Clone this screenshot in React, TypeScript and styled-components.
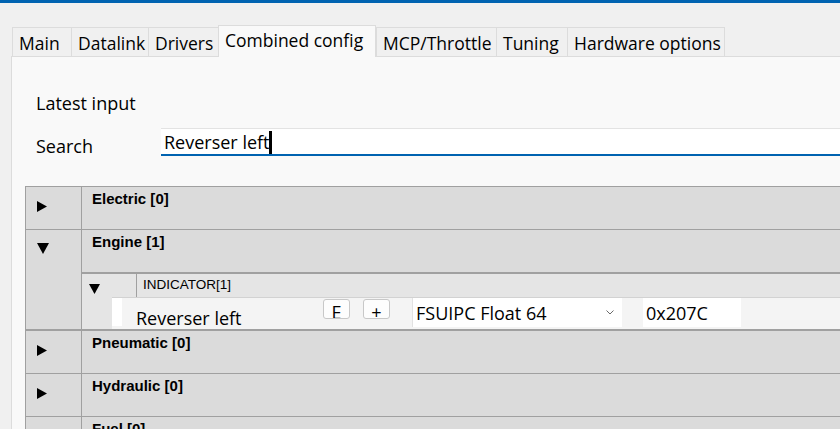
import React from "react";
import styled, { createGlobalStyle } from "styled-components";

const GlobalStyle = createGlobalStyle`
  html, body { margin: 0; padding: 0; overflow: hidden; background: #f0f0f0; }
  body { font-family: "Open Sans", "Noto Sans", sans-serif; color: #000; }
  #root { width: 1000px; }
`;

const Window = styled.div`
  width: 1000px;
  height: 429px;
  display: flex;
  flex-direction: column;
  background: #f0f0f0;
  overflow: hidden;
`;

const AccentBar = styled.div`
  height: 3px;
  flex: none;
  background: #0063b1;
`;

const TabStrip = styled.div`
  display: flex;
  align-items: flex-end;
  height: 31px;
  margin-top: 22px;
  padding-left: 12px;
  flex: none;
  position: relative;
  z-index: 1;
`;

const Tab = styled.div<{ $width: number; $active?: boolean }>`
  box-sizing: border-box;
  width: ${(p) => p.$width}px;
  height: ${(p) => (p.$active ? 32 : 29)}px;
  margin-bottom: ${(p) => (p.$active ? -1 : 0)}px;
  padding: ${(p) => (p.$active ? 2 : 3)}px 0 0 6px;
  border: 1px solid #dcdcdc;
  border-bottom: none;
  border-right: ${(p) => (p.$active ? "1px solid #dcdcdc" : "none")};
  background: ${(p) => (p.$active ? "#f9f9f9" : "#f0f0f0")};
  font-size: 17.5px;
  line-height: 24px;
  white-space: nowrap;
  &:last-child { border-right: 1px solid #dcdcdc; }
`;

const Panel = styled.div`
  flex: 1;
  margin-left: 11px;
  background: #f9f9f9;
  border-left: 1px solid #dcdcdc;
  border-top: 1px solid #dcdcdc;
  padding-top: 34px;
`;

const FormRow = styled.div<{ $gap?: number }>`
  display: grid;
  grid-template-columns: 125px 1fr;
  padding-left: 24px;
  margin-top: ${(p) => p.$gap ?? 0}px;
`;

const FieldLabel = styled.div<{ $offset?: number }>`
  font-size: 18px;
  line-height: 24px;
  padding-top: ${(p) => p.$offset ?? 0}px;
`;

const SearchBox = styled.div`
  box-sizing: border-box;
  height: 28px;
  background: #fff;
  border-top: 1px solid #e3e3e3;
  border-bottom: 2px solid #0063b1;
  padding: 1px 0 0 3px;
  display: flex;
  align-items: center;
  font-size: 18px;
  line-height: 24px;
`;

const TextCaret = styled.span`
  display: inline-block;
  width: 3px;
  height: 23px;
  background: #000;
  margin-left: -1px;
`;

const Tree = styled.div`
  margin: 28px 0 0 13px;
  border-top: 1px solid #a0a0a0;
  border-left: 1px solid #a0a0a0;
  font-family: "Liberation Sans", Arial, sans-serif;
`;

const CategoryRow = styled.div<{ $expanded?: boolean }>`
  display: grid;
  grid-template-columns: 56px 1fr;
  background: #dbdbdb;
  border-bottom: ${(p) => (p.$expanded ? 2 : 1)}px solid #a0a0a0;
`;

const ToggleCell = styled.div<{ $expanded?: boolean }>`
  box-sizing: border-box;
  border-right: 1px solid #a0a0a0;
  padding: ${(p) => (p.$expanded ? 13 : 14)}px 0 0 11px;
`;

const CategoryBody = styled.div`
  min-width: 0;
`;

const CategoryTitle = styled.div`
  box-sizing: border-box;
  height: 42px;
  padding: 3px 0 0 10px;
  font-weight: bold;
  font-size: 15px;
  line-height: 17px;
`;

const Nested = styled.div`
  border-top: 2px solid #a0a0a0;
`;

const SubRow = styled.div`
  display: grid;
  grid-template-columns: 55px 1fr;
  height: 23px;
  background: #e5e5e5;
`;

const SubToggle = styled.div`
  box-sizing: border-box;
  border-right: 1px solid #a0a0a0;
  padding: 10px 0 0 7px;
`;

const SubTitle = styled.div`
  padding: 3px 0 0 6px;
  font-size: 13.5px;
  line-height: 16px;
`;

const DetailRow = styled.div`
  display: grid;
  grid-template-columns: 30px 1fr;
  height: 32px;
`;

const Indent = styled.div`
  background: #e5e5e5;
`;

const DetailBody = styled.div`
  box-sizing: border-box;
  display: flex;
  align-items: flex-start;
  background: #f4f4f4;
  border-top: 1px solid #d2d2d2;
  font-family: "Open Sans", "Noto Sans", sans-serif;
  font-size: 18px;
  line-height: 24px;
`;

const Gutter = styled.div`
  width: 10px;
  height: 28px;
  background: #fff;
  flex: none;
`;

const ItemLabel = styled.div`
  box-sizing: border-box;
  width: 201px;
  height: 28px;
  padding: 8px 0 0 14px;
  overflow: hidden;
  white-space: nowrap;
  flex: none;
`;

const SmallButton = styled.div<{ $gap?: number }>`
  box-sizing: border-box;
  width: 27px;
  height: 20px;
  margin: 1px 0 0 ${(p) => p.$gap ?? 0}px;
  border: 1px solid #c8c8c8;
  border-radius: 3px;
  background: #fdfdfd;
  overflow: hidden;
  text-align: center;
  line-height: 24px;
  flex: none;
`;

const Select = styled.div`
  box-sizing: border-box;
  width: 210px;
  height: 29px;
  margin-left: 22px;
  background: #fff;
  border-left: 1px solid #e2e2e2;
  padding-left: 3px;
  display: flex;
  align-items: center;
  flex: none;
`;

const Chevron = styled.svg`
  margin-left: auto;
  margin-right: 8px;
`;

const ValueBox = styled.div`
  box-sizing: border-box;
  width: 98px;
  height: 29px;
  margin-left: 21px;
  background: #fff;
  padding-left: 3px;
  display: flex;
  align-items: center;
  flex: none;
`;

const Disclosure = ({ open, small }: { open: boolean; small?: boolean }) =>
  open ? (
    <svg width={small ? 11 : 12} height={small ? 10 : 11} style={{ display: "block" }}>
      <polygon points={small ? "0,0 11,0 5.5,10" : "0,0 12,0 6,11"} fill="#000" />
    </svg>
  ) : (
    <svg width={10} height={11} style={{ display: "block" }}>
      <polygon points="0,0 10,5.5 0,11" fill="#000" />
    </svg>
  );

const tabs = [
  { label: "Main", width: 59 },
  { label: "Datalink", width: 77 },
  { label: "Drivers", width: 70 },
  { label: "Combined config", width: 158, active: true },
  { label: "MCP/Throttle", width: 120 },
  { label: "Tuning", width: 71 },
  { label: "Hardware options", width: 158 },
];

const categories = [
  { name: "Electric", count: 0 },
  { name: "Engine", count: 1, expanded: true },
  { name: "Pneumatic", count: 0 },
  { name: "Hydraulic", count: 0 },
  { name: "Fuel", count: 0 },
];

export default function App() {
  return (
    <Window>
      <GlobalStyle />
      <AccentBar />
      <TabStrip>
        {tabs.map((t) => (
          <Tab key={t.label} $width={t.width} $active={t.active}>
            {t.label}
          </Tab>
        ))}
      </TabStrip>
      <Panel>
        <FormRow>
          <FieldLabel>Latest input</FieldLabel>
          <div />
        </FormRow>
        <FormRow $gap={13}>
          <FieldLabel $offset={6}>Search</FieldLabel>
          <SearchBox>
            Reverser left
            <TextCaret />
          </SearchBox>
        </FormRow>
        <Tree>
          {categories.map((c) => (
            <CategoryRow key={c.name} $expanded={c.expanded}>
              <ToggleCell $expanded={c.expanded}>
                <Disclosure open={!!c.expanded} />
              </ToggleCell>
              <CategoryBody>
                <CategoryTitle>
                  {c.name} [{c.count}]
                </CategoryTitle>
                {c.expanded && (
                  <Nested>
                    <SubRow>
                      <SubToggle>
                        <Disclosure open small />
                      </SubToggle>
                      <SubTitle>INDICATOR[1]</SubTitle>
                    </SubRow>
                    <DetailRow>
                      <Indent />
                      <DetailBody>
                        <Gutter />
                        <ItemLabel>Reverser left</ItemLabel>
                        <SmallButton>E</SmallButton>
                        <SmallButton $gap={13}>+</SmallButton>
                        <Select>
                          FSUIPC Float 64
                          <Chevron width="8" height="5" viewBox="0 0 8 5">
                            <polyline points="0.5,0.5 4,4 7.5,0.5" fill="none" stroke="#6a6a6a" strokeWidth="1" />
                          </Chevron>
                        </Select>
                        <ValueBox>0x207C</ValueBox>
                      </DetailBody>
                    </DetailRow>
                  </Nested>
                )}
              </CategoryBody>
            </CategoryRow>
          ))}
        </Tree>
      </Panel>
    </Window>
  );
}
